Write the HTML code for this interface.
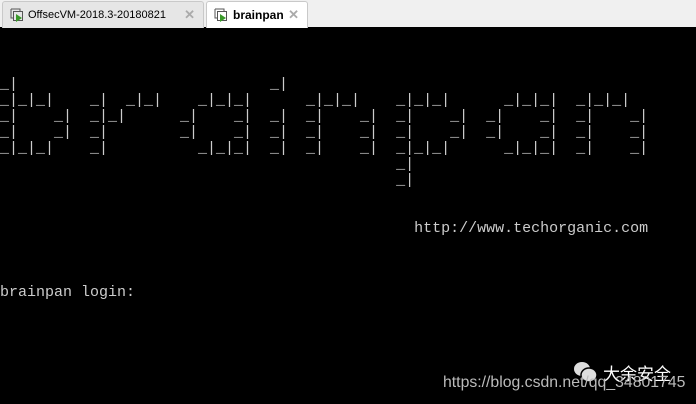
<!DOCTYPE html><html><head><style>
body{margin:0;width:696px;height:404px;background:#000;overflow:hidden;position:relative;font-family:"Liberation Sans",sans-serif}
.bar{position:absolute;left:0;top:0;width:696px;height:27px;background:#f0f0f0}
.tab{position:absolute;top:1px;height:26px;border:1px solid #c9c9c9;border-bottom:none;border-radius:3px 3px 0 0;font-size:12px;line-height:26px;color:#000}
.t1{left:2px;width:200px;background:#e6e6e6;font-size:11px}
.t2{left:206px;width:100px;background:#fff;font-weight:bold}
.ic{position:absolute;left:7px;top:6px;width:14px;height:14px}
.x{position:absolute;right:8px;top:0;color:#aaa;font-size:13px;font-weight:bold}
pre{position:absolute;left:0;top:77px;margin:0;font-family:"Liberation Mono",monospace;font-size:15px;line-height:16px;color:#ccc}
</style></head><body>
<div class="bar">
<div class="tab t1"><svg class="ic" viewBox="0 0 14 14"><path d="M1 1h9v2M1 1v9h2" fill="none" stroke="#555"/><rect x="3.5" y="3.5" width="9" height="9" fill="none" stroke="#555"/><path d="M6 6l6 4-6 4z" fill="#3a9a2a"/></svg><span style="position:absolute;left:25px">OffsecVM-2018.3-20180821</span><span class="x">✕</span></div>
<div class="tab t2"><svg class="ic" viewBox="0 0 14 14"><path d="M1 1h9v2M1 1v9h2" fill="none" stroke="#555"/><rect x="3.5" y="3.5" width="9" height="9" fill="none" stroke="#555"/><path d="M6 6l6 4-6 4z" fill="#3a9a2a"/></svg><span style="position:absolute;left:26px">brainpan</span><span class="x">✕</span></div>
</div>
<pre>_|                            _|
_|_|_|    _|  _|_|    _|_|_|      _|_|_|    _|_|_|      _|_|_|  _|_|_|
_|    _|  _|_|      _|    _|  _|  _|    _|  _|    _|  _|    _|  _|    _|
_|    _|  _|        _|    _|  _|  _|    _|  _|    _|  _|    _|  _|    _|
_|_|_|    _|          _|_|_|  _|  _|    _|  _|_|_|      _|_|_|  _|    _|
                                            _|
                                            _|


                                              http://www.techorganic.com



brainpan login:</pre>
<svg style="position:absolute;left:573px;top:361px" width="26" height="22" viewBox="0 0 26 22"><ellipse cx="9" cy="8" rx="8" ry="7" fill="#ddd"/><ellipse cx="16" cy="14" rx="8" ry="7" fill="#ddd" stroke="#000" stroke-width="1.5"/></svg>
<div style="position:absolute;left:603px;top:360px;color:#fff;font-size:17px;font-family:'Liberation Sans','Noto Sans CJK SC',sans-serif">大余安全</div>
<div style="position:absolute;left:443px;top:374px;color:#bbb;font-size:15.8px">https://blog.csdn.net/qq_34801745</div>
</body></html>
